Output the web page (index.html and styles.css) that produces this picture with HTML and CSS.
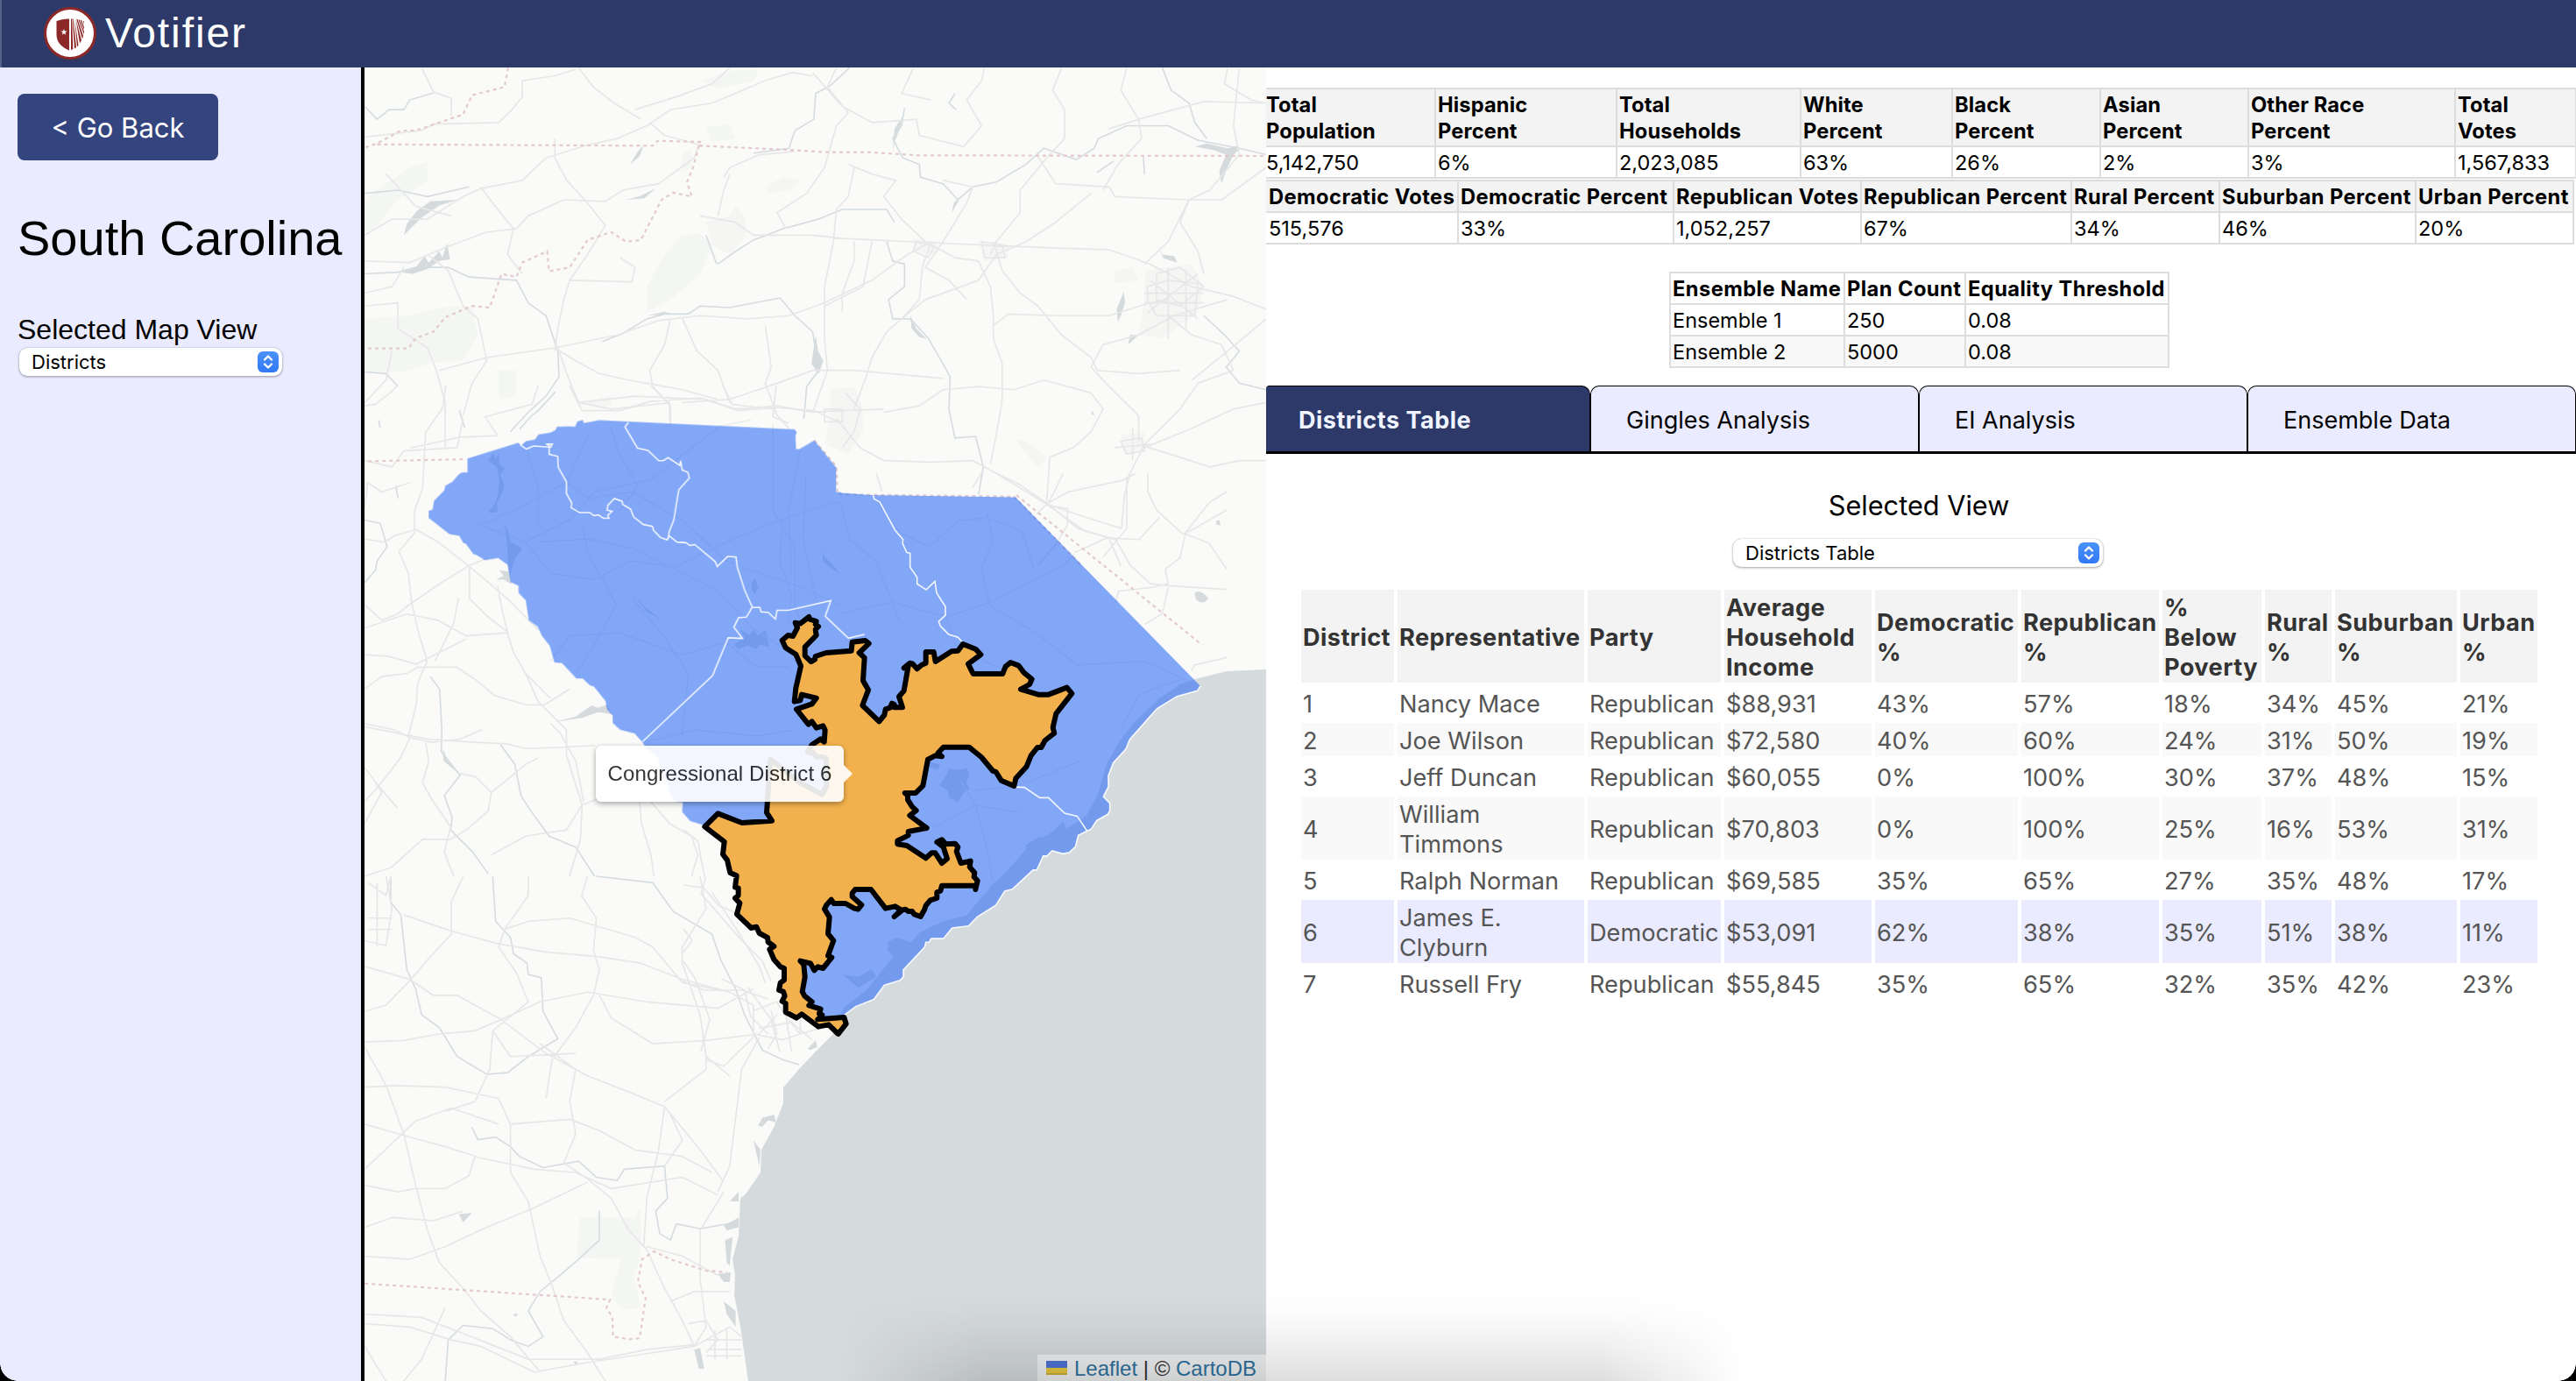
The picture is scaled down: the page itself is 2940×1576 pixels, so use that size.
FILE: index.html
```html
<!DOCTYPE html>
<html lang="en">
<head>
<meta charset="utf-8">
<title>Votifier</title>
<link rel="stylesheet" href="styles.css">
</head>
<body>
<header class="topbar">
  <svg class="logo" viewBox="0 0 60 60">
    <circle cx="30" cy="30" r="28.5" fill="#fff" stroke="#8c2828" stroke-width="3"/>
    <path d="M14.500 16Q22 13 29 13.500V49.500Q15 44 14.500 32Z" fill="#8c2828"/>
    <path d="M23 25l.9 2.600h2.700l-2.200 1.600.8 2.600-2.200-1.600-2.200 1.600.8-2.600-2.200-1.600h2.700Z" fill="#fff"/>
    <path d="M31 13.500h1.200L33.300 48 31 49ZM33.500 13.500L37 46l-2 1.500L32.800 13.500ZM35 13.500l4.500 30-1.500 2ZM36.500 13.700L43 38l-2 3.500ZM38.500 14L45 33l-1 3.500L37.300 13.900ZM40.500 14.500L46 28v3.500L39.300 14.200ZM43 15l3 8v3L41.500 14.800ZM45 16l1 .3V20Z" fill="#8c2828"/>
  </svg>
  <span class="brand">Votifier</span>
</header>
<main class="layout">
  <aside class="sidebar">
    <button class="back">&lt; Go Back</button>
    <h1 class="state">South Carolina</h1>
    <label class="view-label">Selected Map View</label>
    <div class="select select-side"><span>Districts</span>
      <svg class="stepper" viewBox="0 0 24 24"><path d="M8 9.500l4-4 4 4M8 14.500l4 4 4-4"/></svg></div>
  </aside>
  <section class="map">
    <svg class="canvas" viewBox="416 77 1029 1499">
      <rect class="land" x="416" y="77" width="1029" height="1499"/>
      <g class="park">
        <g transform="translate(400 70) scale(.6763 .3674)">
          <path d="M24 800L100 790 150 765 205 760 215 850 190 930 140 935 90 965 24 965ZM500 700L530 600 560 540 590 535 610 570 590 660 540 740 500 780ZM24 430L60 380 100 330 130 310 130 370 80 430 40 520 24 530ZM250 960L280 960 280 1040 250 1050ZM590 60L640 30 690 25 680 60 620 85ZM600 205L640 195 650 240 610 250ZM560 290L575 270 575 330 560 345ZM400 1055L440 1040 440 1070 405 1075Z"/>
        </g>
        <g transform="translate(400 1000) scale(.6763 .3674)"><path d="M387 1060H480L490 1030V1180L478 1240 490 1340 458 1345 440 1300 457 1190 382 1185Z"/></g>
      </g>
      <g class="urban" transform="translate(400 70) scale(.6763 .3674)">
        <path d="M600 500L640 480 650 450 665 480 668 540 640 600 610 570ZM700 390L730 360 760 370 740 400 705 410ZM810 1020L850 1010 865 1080 865 1150 840 1220 800 1190 810 1110ZM1120 1170L1140 1180 1175 1230 1160 1260 1140 1220ZM1340 650L1420 630 1440 700 1430 780 1370 860 1330 850 1340 740ZM1290 650L1320 640 1330 680 1290 690ZM1300 1160L1340 1150 1340 1210 1305 1220ZM950 550L990 560 990 600 950 590ZM1060 560L1110 570 1110 610 1070 620Z"/>
      </g>
      <path class="sea" d="M1445 764L1400 766 1360 776 1347 781 1323 797 1293 826 1277 847 1263 872 1253 906 1240 931 1220 944 1190 955 1177 961 1160 982 1140 1003 1120 1024 1103 1045 1077 1051 1050 1064 1033 1083 1020 1091 990 1129 963 1150 952 1171 951 1180 931 1200 912 1220 894 1241 894 1259 883 1287 869 1312 868 1338 850 1364 845 1367 843 1411 836 1437 839 1456 838 1478 845 1514 854 1576H1445Z"/>
      <g class="lake">
        <g transform="translate(400 70) scale(.6763 .3674)">
          <path d="M90 540L95 505 112 465 135 435 180 430 150 448 120 485ZM85 655L110 640 125 605 132 625 150 590 155 610 163 565 168 615 150 620 130 645 105 660ZM1425 265L1445 255 1480 270 1497 262 1500 275 1490 290 1480 330 1470 380 1466 340 1478 290 1455 275ZM778 940L785 850 789 900 798 930 790 972 782 950ZM1295 810L1293 770 1305 715 1307 750 1300 790ZM1360 565L1370 600 1390 605 1395 625 1372 612ZM945 790L955 830 972 862 960 856 947 830ZM915 290L918 210 932 170 926 215 918 250ZM472 320L485 280 495 260 488 295ZM500 790L530 778 545 785 515 788ZM465 430L490 418 515 395 496 425ZM1015 470L1018 440 1030 420ZM1312 880L1316 850 1330 850ZM1252 1085L1256 1100 1250 1095ZM1461 1430L1466 1425 1468 1440 1462 1440Z"/>
        </g>
        <g transform="translate(400 440) scale(.35714)">
          <path d="M440 240L458 215 462 235 475 215 475 250 492 265 478 285 492 320 482 350 468 375 470 405 440 405 462 378 472 345 476 300 468 260ZM492 440L505 470 512 500 550 520 528 550 520 570 507 620 503 550 500 500ZM1282 630L1295 615 1303 650 1290 665 1282 650ZM1225 828L1260 805 1245 780 1275 798 1290 780 1300 798 1328 782 1338 835 1310 828 1295 842 1270 830 1240 842ZM650 1075L720 1058 770 1022 790 1030 820 1020 835 1050 790 1044 740 1062ZM465 620L490 608 475 590 510 595 515 635 490 620ZM895 660L940 708 990 745 950 725ZM1505 480L1510 540 1565 600 1530 580 1510 560ZM295 1160L310 1200 355 1245 325 1222 298 1200Z"/>
        </g>
        <g transform="translate(880 540) scale(.33333 .42088)">
          <path d="M1450 325Q1470 312 1497 340Q1480 360 1455 342ZM1523 130L1535 128 1538 142 1527 140ZM577 845L600 820 610 800 640 805 672 800 680 820 668 840 680 855 660 865 640 893 610 880 605 862ZM945 985L1000 945 1008 960 1000 985 960 992ZM870 1010L920 985 925 1005 880 1020ZM750 1120L840 1060 890 1030 895 1045 820 1085 750 1130ZM400 1270L430 1260 490 1275 520 1240 540 1270 460 1310 420 1310 400 1295ZM245 1360L300 1365 345 1345 360 1365 300 1395ZM530 780L580 790 570 805 530 795Z"/>
        </g>
        <g transform="translate(400 1000) scale(.6763 .3674)">
          <path d="M688 775L695 750 715 740 718 765 705 758 695 778ZM680 820L692 850 690 900ZM772 535L785 510 788 530 775 540ZM640 1010L655 980 655 1010ZM630 1085L655 1060 655 1090 635 1100ZM183 1050L205 1045 190 1075ZM620 1235L642 1230 640 1260 630 1260ZM580 1470L590 1465 597 1530 588 1530ZM275 1358L283 1360 278 1370ZM376 1507L384 1508 380 1518ZM632 1130L645 1120 640 1210 635 1200ZM630 1320L650 1350 650 1400 635 1360Z"/>
        </g>
      </g>
      <g class="river">
        <g transform="translate(400 70) scale(.6763 .3674)">
          <path d="M24 140L45 180 65 150 90 150 100 120 140 98M842 20L810 75 785 100 782 180 750 215 740 270 680 285M935 145L930 200 915 240 932 300 960 320 962 360 1000 380 1025 430 1050 390 1090 375 1140 320 1170 270 1225 305 1255 270 1262 240 1310 200 1380 200 1430 245 1500 270 1545 290M1370 20L1385 90 1415 130 1425 190 1445 240M620 630L650 590 680 555 730 520 790 490 830 460 905 460 918 500M425 870L460 845 500 800 530 785 570 785 590 760 640 765 725 735 750 790 780 840 790 960 770 1010 765 1110M600 540L618 630M905 560L915 620 935 630 935 700 908 740 915 800 945 800 975 860 1000 940 1012 980 1010 1080 1020 1170 1055 1165 1068 1260 1060 1345M24 660L80 655 110 640 165 640 200 670 280 680 300 750 330 790 350 900 352 980 330 1040 300 1090 270 1150M24 965L60 970 80 1010M1440 790L1475 850 1500 900 1478 950 1500 1000 1545 1020M24 410L80 400 130 420 200 390M1020 100L1010 130 1022 150M1288 310L1260 345M1338 295L1340 350"/>
        </g>
        <g transform="translate(400 440) scale(.35714)">
          <path d="M45 430L95 440 117 515 85 560 80 590 45 630M255 930L285 970 292 1100 290 1170 350 1245 300 1310 325 1380 320 1420 390 1490 440 1560M480 1148L525 1210 545 1310 570 1350 635 1440 720 1475 780 1568M655 20L600 80 575 100 540 140M348 80L365 135M90 110L95 135M145 320L152 360"/>
        </g>
        <g transform="translate(400 1000) scale(.6763 .3674)">
          <path d="M68 0L68 80 85 120 95 290 110 350 120 430 150 470 180 560 230 615 265 610 300 560 350 505 325 420 322 315 300 305 298 270 275 240 270 190 245 140 240 0M415 0L510 20 545 110 610 180 625 260 650 350 665 430 695 540 730 570 757 585M205 780L215 818 245 810 270 840 285 870 325 905 385 885 415 935 450 945 462 910 530 900 535 1000 515 1040 522 1110 540 1130 550 1080 590 1095 650 1075M420 1040L420 1130 385 1190 350 1245 320 1290 300 1350 325 1430 300 1460 270 1440 240 1405 190 1395 165 1440 160 1568"/>
        </g>
      </g>
      <g class="road">
        <g transform="translate(400 70) scale(.6763 .3674)">
          <path d="M24 235L120 215 140 195 250 190 270 155 290 110 290 60 345 45 380 25M120 20L140 95 170 115 170 170M385 20L410 80 445 130 490 180M640 20L610 70 550 110 480 150M780 35L830 140 880 190 955 180 960 230 1035 265 1065 200 1040 120 1065 60 1070 20M820 20L805 80 840 160 820 200 800 330 770 410 720 470 735 520M1200 20L1185 90 1205 150 1205 240 1175 300 1130 400 1130 470 1090 560 1080 600M1310 20L1300 90 1330 180 1335 240 1295 320 1270 400M1480 20L1475 70 1520 120 1545 130M1545 130L1440 125 1330 180 1280 210M950 20L930 100 980 120M24 620L100 625 165 575 230 530 280 520 300 480 360 430 430 435 460 400 520 380 580 300 590 250M24 540L70 490 130 490 190 420 220 395 290 370 330 300 400 260 450 240M345 240L345 300 365 370 400 440 430 510 400 600 370 680 360 740 350 830 345 900M370 680L475 685 480 640 455 610M220 390L240 440 275 520 265 600 290 660M24 720L70 700 90 640M60 350L110 450 170 480M130 600L165 650 190 760 215 800 230 930 205 1000 190 1100M24 760L80 750 80 830 130 890 145 960 160 1060 160 1200M150 960L230 920 345 890 450 850 520 805 590 790 670 800 740 790 800 750 880 680 940 600 970 570M345 890L380 930 420 970 470 990 560 1020 620 1050M350 890L365 970 385 1060 440 1080 540 1060M385 1060L480 1040 600 1050 650 1080 720 1070 780 1090 830 1085 900 1080M540 800L530 880 505 960 510 1010 540 1070 540 1130M560 800L585 900 620 960 640 1060M590 480L650 500 680 540 780 540 830 550 940 560 1060 570 1190 580 1280 585 1350 630 1420 700 1490 730 1545 770M630 360L640 330 690 290 750 280M620 480L630 400 640 350M850 330L840 420 820 460 815 560 800 700 800 860 805 960 780 1090M850 560L850 620 830 720 830 780M880 560L865 700 800 760M840 320L880 350 920 370 900 420 930 490 970 560 1020 610 1060 620M1000 370L1050 390 1040 440 1000 560 970 640 1010 680 1040 740M1160 295L1190 380 1280 390 1290 420 1410 430 1470 430 1545 330M1500 20L1490 200 1500 290 1450 400 1415 430 1380 560 1340 630M1415 430L1400 500 1430 590 1440 660M980 560L965 640 960 740 930 800 905 840 880 920 870 980 850 1080M1060 620L1080 700 1085 790 1085 860 1100 940 1100 1050 1090 1160 1080 1250M1085 560L1100 650 1130 720 1160 760 1200 850 1250 920 1260 960 1330 970 1400 960M1085 820L1110 785 1190 790 1280 790 1350 750 1380 740M930 800L970 740 1060 680 1090 600 1140 560 1190 500 1250 410M1480 740L1390 790 1330 850 1270 880 1250 950 1280 1010 1330 1100 1330 1180M1380 790L1420 850 1470 880 1490 960 1430 1000 1400 1080 1340 1190 1310 1300 1310 1450 1270 1540M900 1090L960 1070 1000 1020 1060 1010 1120 1020 1170 990 1250 1030 1270 1080 1250 1150 1220 1200 1180 1230 1175 1370M820 1110L860 1200 900 1240 980 1245 1050 1240 1090 1280 1170 1370 1240 1460 1280 1480 1300 1568M560 1060L640 1050 720 1000 780 960 850 960 1000 985M700 820L710 950 700 1000 720 1100 740 1140M1330 1190L1400 1230 1450 1260 1500 1240 1545 1240M1545 800L1500 870 1420 990M1545 1060L1490 1080 1420 1140 1340 1200M1180 1380L1210 1390 1210 1440 1190 1500 1160 1568M24 1240L70 1260 90 1210 180 1200 190 1110M24 1060L60 990 70 900M500 200L540 150 610 130 700 60 745 35 780 45M505 190L530 230 590 260M450 240L500 200"/>
          <path d="M1345 700L1380 680 1430 690 1425 790 1360 790 1345 740ZM1360 660L1400 640 1440 700 1400 760 1360 740ZM1380 640V860M1410 650V830M1340 720H1440M1340 750H1440M1345 780L1430 660M1350 680L1430 800M1065 560L1100 570 1105 610 1070 610ZM955 560L985 575 975 610 950 590ZM800 1080L830 1080 830 1120 800 1120ZM1300 1180L1335 1170 1340 1210 1310 1220ZM1320 1140V1240M1290 1200L1350 1190M835 1030L860 1080 850 1150 830 1200"/>
        </g>
        <g transform="translate(400 440) scale(.35714)">
          <path d="M45 65L80 60 130 20 150 0M305 0L295 70 240 150 235 250 230 330 205 400 205 470 155 530 185 600 195 690 215 780 245 880 215 950 210 1020 185 1120M45 390L55 310 100 340 190 310M45 490L110 500 140 480 210 460 280 500 370 570 430 620 500 680 600 780M45 700L100 750 150 730 195 695 290 630 380 575 440 550M380 580L380 680 440 740 500 785 520 850 560 920 620 980 640 1000M45 775L180 730 280 750 370 800 500 790M45 860L120 865 210 890 250 870 370 810M45 970L100 930 180 920 215 900 340 900 400 940 460 990 560 1020 620 1020 700 970M45 1080L140 1100 190 1125 260 1140 350 1130 420 1100M45 1090L250 1130 400 1140 500 1145 560 1160 690 1155 780 1150M345 680L330 760 270 880M470 640L485 720 505 800M190 1125L160 1190 90 1280 45 1330M240 1140L250 1200 230 1270 265 1330 320 1410 300 1490 330 1568M350 1240L400 1250 450 1300 500 1260 560 1210 600 1190M450 1300L440 1360 370 1420 320 1450 230 1450 130 1540 45 1568M560 920L600 1010 690 1100 690 1180 740 1340 690 1420 560 1440 450 1500M740 1340L820 1310 880 1260M740 1340L735 1450 700 1568M640 1080L670 1110 720 1200 745 1330M920 1280L930 1400 960 1500 970 1568M960 1330L1020 1400 1090 1440 1110 1500 1090 1568M45 1400L100 1300 80 1270M45 1220L90 1280 150 1350M600 0L580 60 430 100 470 160 350 165 190 200M700 0L740 80 860 80 960 50 1120 40 1240 80 1360 70 1480 80 1568 120M960 0L1020 60 1020 110M1360 0L1350 100 1400 120M1190 0L1220 60 1300 70"/>
          <path class="faint" d="M400 440L560 500 700 430 780 340 960 300 1180 130 1280 110M430 440L540 390 690 310 760 160M560 500L640 600 780 620 900 560 1040 580 1200 500 1400 420 1568 370M600 500L760 490 900 520 1040 590 1180 660 1290 780 1420 860M690 310L760 360 900 340 1060 430 1200 560 1400 630 1568 700M1350 120L1350 400 1420 520 1420 700 1440 760M1440 200L1400 400 1410 600M640 880L700 800 860 790 1060 860 1200 820 1300 900 1400 900M720 920L760 860 850 700 760 540 740 440M1060 1120L1080 920 1000 800 900 680M940 1140L1100 1100 1300 1120 1420 1100M560 190L600 330 600 440M830 130L860 220 920 320 860 400"/>
        </g>
        <g transform="translate(880 540) scale(.33333 .42088)">
          <path d="M770 0L850 30 950 85 1040 110 1200 150 1210 60 1230 0M1250 0L1200 20 1020 50 950 80 910 110M1000 0L970 50 950 80M1040 215L1150 175 1260 180 1330 120M950 85L1050 150 1180 180 1230 250 1300 300 1360 305 1560 315M1290 0V50L1320 100 1410 165 1450 150 1560 100M1360 305L1350 260 1400 230 1420 160 1500 80 1560 50M1420 165L1500 190 1560 260M1180 350L1190 320 1300 310 1360 300M1280 410L1340 380 1360 310M1440 535L1450 520 1560 500M360 0L380 50M720 0L690 40"/>
          <path class="faint" d="M240 380L420 350 600 390 750 350 1000 250 1040 220M600 390L640 480 760 520 900 560M740 110L760 180 720 260 750 360 900 430 1050 520 1280 510 1420 560M350 60L440 160 540 200 640 130 740 120 860 160 900 260M440 400L360 240 270 180 240 90M700 860L840 850 1060 780M640 820L700 900 740 1020 760 1110M560 960L700 900 850 920M1200 690L1260 600 1400 560M40 120L30 240 70 330 60 400M120 0L110 180 160 360"/>
        </g>
        <g transform="translate(780 680) scale(.33333)">
          <path d="M0 800L50 840 60 900 75 970 60 1020 130 1100 200 1180 270 1250 300 1320M0 990L70 1000 120 1060 190 1090M0 1140L30 1180 0 1220M0 1320L70 1350 200 1350 290 1380M0 1250L40 1310 90 1450 60 1560M130 1310L210 1350 230 1440 290 1500M240 1420L320 1390 350 1440 400 1500 470 1480M220 1340L300 1450 330 1560M260 1480L370 1460 440 1520M300 1420L320 1500 290 1550M350 1430L370 1560M240 1500L340 1520 400 1500 400 1450"/>
        </g>
        <g transform="translate(400 1000) scale(.6763 .3674)">
          <path d="M24 280L100 320 140 370 180 370 250 440 330 550 400 620 470 670 530 715 590 850 630 950M24 420L60 400 100 325 130 260 170 180 170 80 190 0M24 515L90 510 150 490 210 480 260 440 320 390 400 360 500 390 620 410 680 350M260 165L300 140 370 130 480 190 510 220 560 330 640 360 680 400M90 120L170 170 250 210 330 235 420 250 490 270 560 320 640 360M300 0L300 60 260 165 250 220 280 300 300 390 240 480 235 600 210 700 160 730M400 0L390 60 415 130 410 230 420 290 410 370 380 470 340 570 330 690M24 530L60 650 90 800 110 960 130 1100 150 1200 190 1280 220 1350 270 1430 320 1540M24 770L90 805 160 840 220 875 310 910 380 920 440 970 560 935 620 990M24 655L80 650 160 655 250 690 270 770 370 755 420 790 480 850 560 870 610 920M24 1180L100 1190 160 1150 230 1090 310 1030 400 950M240 480L270 560 380 550M320 520L380 600 370 700 380 800 360 890 400 940 440 1000 470 1100 500 1160M530 715L520 850 500 1000 495 1150M530 700L600 600 600 560M420 370L440 440 510 520 600 510 690 490 720 430M600 570L630 590 680 500 680 400M690 500L660 600 650 750 640 900 620 980M590 0L600 100 560 220 560 270 590 430 600 560 640 620M610 50L650 160 690 280 700 330M24 960L80 980 110 970 160 970 200 930 210 870M24 1090L70 1060 140 1070 190 1040M270 770L270 920 300 1010 320 1180 340 1270 360 1380 400 1480 430 1568M24 1360L120 1370 190 1420 300 1500 420 1500 500 1470 580 1455M24 1390L100 1400 170 1440 220 1460 310 1540 400 1510 510 1480 580 1460M500 1160L530 1280 560 1380 580 1460M630 980L590 1100 590 1250 600 1400 580 1460M500 1150L560 1180 620 1240M540 1320L580 1290 640 1290M580 1460L640 1400 660 1430M570 1390L600 1380 620 1440 600 1480M600 1440H660M605 1470H660M600 1490H660M615 1410V1500M635 1410V1500M24 1460L60 1568M160 1340L120 1500 90 1568M24 200L60 215 70 100 60 0M24 910L70 830 110 760 170 720 250 770M530 900L560 820 540 740M30 20L60 60 68 0M30 130H70M30 165H70M45 20V220"/>
        </g>
      </g>
      <g class="border">
        <g transform="translate(400 70) scale(.6763 .3674)">
          <path d="M266 20L260 80 205 105 190 165 110 215 85 215 45 255 24 268M45 258L510 262 518 247 590 250 588 262 740 275 800 282 870 282 960 292 1545 294M588 262L578 330 568 375 576 420 545 408 525 430 490 555 465 560 440 530 400 555 370 640 335 652 332 590 290 625 280 670 255 660 235 765 205 760 160 795 140 840 110 860 98 892 24 892M30 1242L195 1236M783 1178L820 1258 822 1345 1120 1352 1235 1568"/>
        </g>
        <path d="M1160 565L1372 736"/>
        <g transform="translate(400 1000) scale(.6763 .3674)"><path d="M24 1265L438 1315 432 1340 442 1370 443 1430 470 1438 488 1435 498 1310 485 1260 492 1190 512 1165 540 1190 600 1225 635 1230"/></g>
      </g>

      <g class="state-fill">
        <path transform="translate(400 440) scale(.35714)" d="M374 233L536 183 545 192 560 178 590 172 600 157 640 150 655 142 660 132 700 130 718 132 725 115 742 110 746 120 795 111 1420 140 1426 150 1422 160 1424 203 1435 203 1482 175 1552 262 1552 341 1568 341 1568 1390 1348 1390 1250 1398 1172 1368 1130 1405 1086 1392 1060 1362 1062 1332 1040 1330 1020 1305 1018 1285 985 1210 985 1188 945 1160 933 1140 908 1112 862 1100 838 1078 838 1055 820 1035 815 1008 778 962 765 958 742 936 722 936 676 887 652 885 637 832 612 800 598 770 570 750 560 686 537 662 537 640 512 628 502 573 472 551 430 558 400 540 394 540 368 505 360 503 348 480 316 475 250 423 250 400 262 397 267 368 300 335 303 320 325 308 345 285 355 278 374 277Z"/>
        <path transform="translate(880 540) scale(.33333 .42088)" d="M223 52L340 59 837 65 1470 577 1460 590 1390 605 1322 638 1228 722 1215 748 1172 785 1155 820 1155 850 1138 877 1160 895 1160 915 1153 925 1115 942 1095 966 1082 970 1052 982 1042 1013 1022 1028 1000 1032 962 1024 945 1038 932 1038 910 1076 897 1076 826 1128 800 1133 770 1171 706 1203 676 1228 620 1233 590 1262 548 1262 542 1271 530 1272 526 1285 453 1347 453 1366 442 1375 388 1388 352 1427 290 1446 250 1470 170 1480 60 1460 60 1340 100 1340 200 1000Z"/>
      </g>
      <g class="district-line">
        <g transform="translate(400 440) scale(.35714)">
          <path d="M543 190L562 203 585 193 640 197 645 187 625 187 635 192 635 220 662 226 664 262 690 308 690 345 707 375 705 390 732 406 765 406 778 416 792 413 808 424 826 424 822 415 836 402 820 398 822 383 843 361 868 370 870 380 895 395 905 420 936 444 965 450 968 462 990 485 1012 493 1018 480 1043 500 1072 502 1085 511 1100 508 1165 562 1172 578 1205 546 1232 548 1236 580 1260 655 1284 708 1265 740 1240 742 1225 772 1252 808 1207 806 1157 927 933 1138M888 118L877 132 917 200 950 207 985 240 1000 240 1015 230 1052 255 1055 240 1060 270 1078 277 1083 295 1049 333 1033 430 1018 468 1015 490M1284 708L1308 709 1312 723 1335 725 1358 746 1363 718 1400 718 1535 687 1517 737 1591 807 1643 795"/>
        </g>
        <g transform="translate(880 540) scale(.33333 .42088)">
          <path d="M350 60L353 70 372 78 425 155 452 180 450 190 465 215 476 217 476 255 500 282 500 300 531 316 561 293 567 325 597 362 597 385 574 402 580 415 608 437 640 445 655 458M838 851L868 852 920 880 950 880 1005 922 1048 930 1082 970M1470 577L1460 590 1390 605 1322 638 1228 722 1215 748 1172 785 1155 820 1155 850 1138 877 1160 895 1160 915 1153 925 1115 942 1095 966 1082 970 1052 982 1042 1013 1022 1028 1000 1032 962 1024 945 1038 932 1038 910 1076 897 1076 826 1128 800 1133 770 1171 706 1203 676 1228 620 1233 590 1262 548 1262 542 1271 530 1272 526 1285 453 1347 453 1366 442 1375 388 1388 352 1427 290 1446 250 1470"/>
        </g>
      </g>
      <path class="active-district" transform="translate(780 680) scale(.33333)" d="M430 72L432 80 455 87 452 98 462 105 452 115 455 135 416 175 416 205 437 225 450 218 452 207 488 195 575 188 578 158 622 153 635 163 602 195 620 212 615 290 633 322 613 375 670 430 688 408 692 388 708 383 714 368 722 372 722 382 750 382 738 345 755 325 770 240 755 247 775 230 785 233 800 250 815 237 830 230 830 192 857 192 863 225 918 190 940 188 957 165 1000 182 1018 201 975 233 992 267 1093 267 1103 242 1120 228 1148 239 1165 262 1193 285 1185 303 1155 320 1215 338 1250 338 1313 314 1330 334 1276 403 1265 451 1270 470 1238 495 1225 519 1212 519 1190 547 1175 584 1138 625 1132 651 1088 632 1070 603 1060 600 1020 552 978 518 890 518 872 538 885 550 862 547 837 560 820 650 795 675 758 675 768 683 768 698 783 722 797 735 775 752 833 795 770 807 770 820 733 838 733 850 765 855 830 898 850 880 862 880 885 915 903 900 890 860 868 843 885 835 898 850 930 848 940 860 935 875 950 915 983 908 980 928 997 948 995 962 1007 975 1000 1005 1000 992 885 992 880 1010 868 1015 868 1035 845 1042 830 1060 825 1075 812 1098 790 1090 783 1080 770 1080 760 1073 750 1075 722 1098 745 1075 725 1063 692 1070 642 1005 588 1005 578 1018 578 1030 610 1058 598 1073 585 1070 555 1053 515 1053 506 1040 490 1058 483 1072 500 1100 495 1157 514 1180 495 1232 508 1238 478 1275 460 1270 448 1282 435 1258 400 1250 412 1262 416 1305 407 1355 415 1370 440 1390 430 1402 470 1415 465 1430 475 1435 460 1450 550 1443 557 1465 530 1500 497 1468 462 1475 405 1432 387 1445 350 1425 350 1395 338 1388 347 1370 342 1355 327 1350 332 1325 345 1315 345 1275 332 1270 310 1245 295 1210 310 1200 290 1185 288 1170 260 1155 250 1133 232 1137 183 1090 193 1052 177 1035 188 1025 188 1000 177 998 182 958 160 948 150 905 135 885 140 842 73 790 118 745 200 777 303 770 285 742 298 560 330 585 400 640 475 680 490 650 488 555 455 550 445 538 425 535 440 510 470 490 482 500 485 460 478 445 455 452 440 430 428 440 387 388 440 370 455 350 405 338 400 358 380 362 385 315 392 285 402 240 385 200 350 178 338 152 358 135 375 138 390 110 383 92 400 95Z"/>
    </svg>
    <div class="tooltip">Congressional District 6</div>
    <div class="attribution">
      <svg class="flag" viewBox="0 0 24 16"><path fill="#4f74d6" d="M0 0h24v8H0z"/><path fill="#e6c640" d="M0 8h24v6H0z"/><path fill="#c9ab3c" d="M0 14h24v2H0z"/></svg>
      <span class="credits"><a>Leaflet</a> | © <a>CartoDB</a></span>
    </div>
  </section>
  <section class="panel">
    <table class="summary summary-a">
      <colgroup><col style="width:193px"><col style="width:207px"><col style="width:210px"><col style="width:173px"><col style="width:169px"><col style="width:169px"><col style="width:236px"><col style="width:138px"></colgroup>
      <tr><th>Total<br>Population</th><th>Hispanic<br>Percent</th><th>Total<br>Households</th><th>White<br>Percent</th><th>Black<br>Percent</th><th>Asian<br>Percent</th><th>Other Race<br>Percent</th><th>Total<br>Votes</th></tr>
      <tr><td>5,142,750</td><td>6%</td><td>2,023,085</td><td>63%</td><td>26%</td><td>2%</td><td>3%</td><td>1,567,833</td></tr>
    </table>
    <table class="summary summary-b">
      <colgroup><col style="width:219px"><col style="width:246px"><col style="width:214px"><col style="width:240px"><col style="width:169px"><col style="width:224px"><col style="width:180px"></colgroup>
      <tr><th>Democratic Votes</th><th>Democratic Percent</th><th>Republican Votes</th><th>Republican Percent</th><th>Rural Percent</th><th>Suburban Percent</th><th>Urban Percent</th></tr>
      <tr><td>515,576</td><td>33%</td><td>1,052,257</td><td>67%</td><td>34%</td><td>46%</td><td>20%</td></tr>
    </table>
    <table class="summary ensembles">
      <colgroup><col style="width:199px"><col style="width:138px"><col style="width:232px"></colgroup>
      <tr><th>Ensemble Name</th><th>Plan Count</th><th>Equality Threshold</th></tr>
      <tr><td>Ensemble 1</td><td>250</td><td>0.08</td></tr>
      <tr class="alt"><td>Ensemble 2</td><td>5000</td><td>0.08</td></tr>
    </table>
    <nav class="tabs">
      <div class="tab active">Districts Table</div><div class="tab">Gingles Analysis</div><div class="tab">EI Analysis</div><div class="tab">Ensemble Data</div>
    </nav>
    <div class="view-title">Selected View</div>
    <div class="select select-view"><span>Districts Table</span>
      <svg class="stepper" viewBox="0 0 24 24"><path d="M8 9.500l4-4 4 4M8 14.500l4 4 4-4"/></svg></div>
    <table class="districts">
      <colgroup><col style="width:106px"><col style="width:213px"><col style="width:152px"><col style="width:168px"><col style="width:163px"><col style="width:157px"><col style="width:113px"><col style="width:76px"><col style="width:139px"><col style="width:88px"></colgroup>
      <tr><th>District</th><th>Representative</th><th>Party</th><th>Average<br>Household<br>Income</th><th>Democratic<br>%</th><th>Republican<br>%</th><th>%<br>Below<br>Poverty</th><th>Rural<br>%</th><th>Suburban<br>%</th><th>Urban<br>%</th></tr>
      <tr><td>1</td><td>Nancy Mace</td><td>Republican</td><td>$88,931</td><td>43%</td><td>57%</td><td>18%</td><td>34%</td><td>45%</td><td>21%</td></tr>
      <tr class="alt"><td>2</td><td>Joe Wilson</td><td>Republican</td><td>$72,580</td><td>40%</td><td>60%</td><td>24%</td><td>31%</td><td>50%</td><td>19%</td></tr>
      <tr><td>3</td><td>Jeff Duncan</td><td>Republican</td><td>$60,055</td><td>0%</td><td>100%</td><td>30%</td><td>37%</td><td>48%</td><td>15%</td></tr>
      <tr class="alt"><td>4</td><td>William<br>Timmons</td><td>Republican</td><td>$70,803</td><td>0%</td><td>100%</td><td>25%</td><td>16%</td><td>53%</td><td>31%</td></tr>
      <tr><td>5</td><td>Ralph Norman</td><td>Republican</td><td>$69,585</td><td>35%</td><td>65%</td><td>27%</td><td>35%</td><td>48%</td><td>17%</td></tr>
      <tr class="picked"><td>6</td><td>James E.<br>Clyburn</td><td>Democratic</td><td>$53,091</td><td>62%</td><td>38%</td><td>35%</td><td>51%</td><td>38%</td><td>11%</td></tr>
      <tr><td>7</td><td>Russell Fry</td><td>Republican</td><td>$55,845</td><td>35%</td><td>65%</td><td>32%</td><td>35%</td><td>42%</td><td>23%</td></tr>
    </table>
  </section>
</main>
<div class="dock-shadow"></div>
<i class="corner corner-left"></i><i class="corner corner-right"></i>
</body>
</html>
```
FILE: styles.css
```css
* { box-sizing: border-box; }
body {
  margin: 0;
  width: 2940px;
  height: 1576px;
  position: relative;
  overflow: hidden;
  display: flex;
  flex-direction: column;
  background: #fff;
  color: #000;
  font-family: Inter, "Liberation Sans", sans-serif;
}

.topbar {
  height: 77px;
  flex: none;
  display: flex;
  align-items: center;
  gap: 10px;
  padding-left: 48px;
  border-left: 2px solid #56628c;
  background: #2d3a69;
  color: #fff;
}
.logo { width: 60px; height: 60px; margin-bottom: 1px; }
.brand { font: 48px/58px "Liberation Sans", sans-serif; letter-spacing: 1.9px; margin-bottom: 1px; }

.layout { flex: 1; display: flex; min-height: 0; }

.sidebar {
  width: 416px;
  flex: none;
  display: flex;
  flex-direction: column;
  align-items: flex-start;
  padding: 30px 0 0 20px;
  border-right: 4px solid #000;
  background: #eaebff;
}
.back {
  width: 229px;
  height: 76px;
  padding: 1px 0 0 0;
  border: 0;
  border-radius: 8px;
  background: #33447e;
  color: #fff;
  font: 31px/75px Inter, sans-serif;
}
.state { margin: 57px 0 0; font: 400 56px/64px "Liberation Sans", sans-serif; white-space: nowrap; }
.view-label { margin-top: 54px; font: 32px/36px "Liberation Sans", sans-serif; }

.select {
  display: flex;
  align-items: center;
  justify-content: space-between;
  height: 32px;
  padding: 0 4px 0 14px;
  border-radius: 9px;
  background: #fff;
  box-shadow: 0 0 1px rgba(0, 0, 0, .35), 0 1px 3px rgba(0, 0, 0, .35);
  font-size: 22px;
  line-height: 32px;
}
.select-side { width: 300px; margin: 3px 0 0 2px; }
.select-view { width: 422px; margin: 20px 0 0 533px; }
.stepper {
  width: 24px;
  height: 24px;
  border-radius: 6px;
  background: linear-gradient(#4a92fa, #3178f5);
  fill: none;
  stroke: #fff;
  stroke-width: 2.400;
  stroke-linecap: round;
  stroke-linejoin: round;
}

.map { position: relative; width: 1029px; flex: none; overflow: hidden; }
.canvas { display: block; width: 1029px; height: 1499px; }
.canvas path { vector-effect: non-scaling-stroke; }
.land { fill: #fafaf8; }
.sea, .lake { fill: #d5dadd; }
.park { fill: #f4f6f4; }
.urban { fill: #f5f5f4; }
.river { fill: none; stroke: #d5dce0; stroke-width: 1.600; }
.road { fill: none; stroke: #e7e7e7; stroke-width: 1.700; stroke-linejoin: round; }
.road .faint { stroke: #e9e9e9; stroke-width: 1.300; }
.border { fill: none; stroke: #e2cace; stroke-width: 2.200; stroke-dasharray: 4 4; }
.state-fill { fill: #3270f7; opacity: .6; }
.district-line { fill: none; stroke: #fff; stroke-opacity: .9; stroke-width: 1.600; }
.active-district { fill: #f3b14e; stroke: #000; stroke-width: 6; stroke-linejoin: round; }

.tooltip {
  position: absolute;
  left: 264px;
  top: 774px;
  width: 283px;
  height: 64px;
  border-radius: 6px;
  background: #fff;
  opacity: .9;
  box-shadow: 0 2px 6px rgba(0, 0, 0, .4);
  color: #222;
  text-align: center;
  font: 24px/63px "Liberation Sans", sans-serif;
  letter-spacing: .1px;
}
.tooltip::after {
  content: "";
  position: absolute;
  left: 283px;
  top: 22px;
  border: 10px solid transparent;
  border-left-color: #fff;
  border-right-width: 0;
}
.attribution {
  position: absolute;
  right: 0;
  bottom: 0;
  width: 261px;
  height: 30px;
  display: flex;
  align-items: center;
  gap: 8px;
  padding-left: 10px;
  background: rgba(255, 255, 255, .6);
  color: #333;
  font: 24px/30px "Liberation Sans", sans-serif;
  white-space: nowrap;
}
.credits { padding-top: 2px; }
.attribution a { color: #2f719f; }
.flag { width: 24px; height: 16px; }

.panel { width: 1495px; flex: none; overflow: hidden; padding-top: 23px; }
.summary {
  border-collapse: collapse;
  table-layout: fixed;
  line-height: 30px;
  white-space: nowrap;
}
.summary th, .summary td {
  height: 36px;
  padding: 2px 0 0 2px;
  border: 2px solid #ddd;
  text-align: left;
  font-size: 23.500px;
}
.summary th { font-size: 23.700px; font-weight: 700; letter-spacing: .42px; }
.summary-a { width: 1495px; }
.summary-a th { height: 66px; background: #f3f3f3; letter-spacing: .1px; }
.summary-a tr > :first-child { padding-left: 0; border-left: 0; }
.summary-b { width: 1492px; margin-top: 1px; }
.summary-b th { background: #f3f3f3; }
.summary-b tr > :first-child { padding-left: 3px; border-left: 0; }
.ensembles { width: 569px; margin: 31px 0 0 460px; }
.ensembles .alt { background: #f8f8f8; }

.tabs {
  display: grid;
  grid-template-columns: 370px 375px 375px 375px;
  height: 78px;
  margin-top: 20px;
  border-bottom: 3px solid #000;
}
.tab {
  height: 75px;
  padding-left: 40px;
  border: 1px solid #000;
  border-bottom: 0;
  border-radius: 10px 10px 0 0;
  background: #eaebff;
  font-size: 27px;
  line-height: 77px;
}
.tab.active {
  padding-left: 37px;
  border-left: 0;
  border-top-left-radius: 4px;
  background: #2d3a69;
  color: #f0f4ff;
  font-weight: 700;
  letter-spacing: .5px;
}
.view-title { margin: 41px 5px 0 0; text-align: center; font-size: 30.700px; line-height: 36px; }

.districts {
  width: 1419px;
  margin: 22px 0 0 36px;
  border-collapse: separate;
  border-spacing: 4px;
  table-layout: fixed;
  color: #555;
  font-size: 27.200px;
  line-height: 34px;
  white-space: nowrap;
}
.districts th, .districts td { height: 38px; padding: 4px 2px 0; text-align: left; }
.districts th { background: #f3f3f3; color: #333; font-weight: 700; letter-spacing: .4px; }
.districts .alt td { background: #f9f9f9; }
.districts .picked td { background: #eaebff; }

.dock-shadow {
  position: absolute;
  left: 960px;
  bottom: 0;
  width: 1030px;
  height: 100px;
  background: linear-gradient(to top, rgba(0, 0, 0, .13), rgba(0, 0, 0, .07) 35%, rgba(0, 0, 0, .015) 75%, transparent);
  mask-image: linear-gradient(to right, transparent, #000 16%, #000 84%, transparent);
}
.corner { position: absolute; bottom: 0; width: 20px; height: 20px; }
.corner-left { left: 0; background: radial-gradient(circle at 100% 0, transparent 19.500px, #000 20px); }
.corner-right { right: 0; background: radial-gradient(circle at 0 0, transparent 19.500px, #000 20px); }
```
